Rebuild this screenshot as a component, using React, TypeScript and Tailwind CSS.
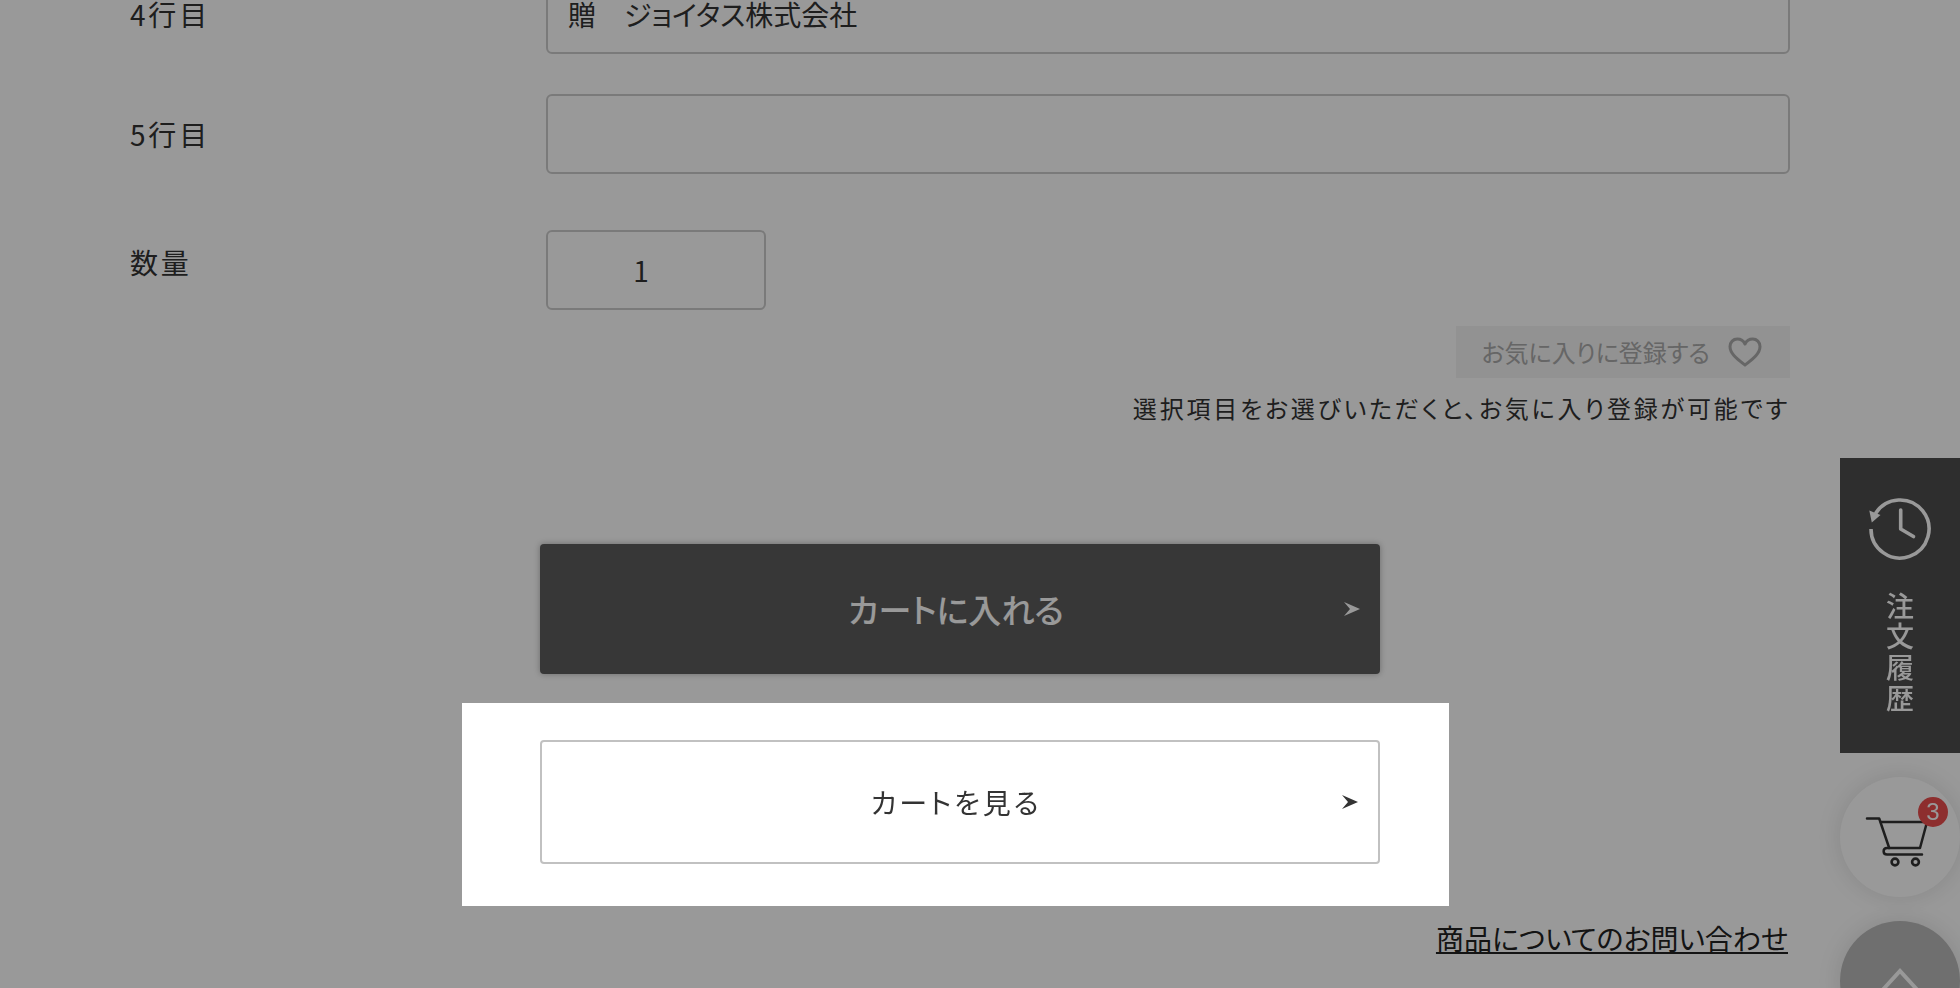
import type { ReactNode } from 'react';
import { useState } from 'react';

function ArrowHead() {
  return (
    <svg viewBox="0 0 16 14" className="absolute top-1/2 right-5 h-[14px] w-4 -translate-y-1/2" aria-hidden="true">
      <path d="M0 0 L16 7 L0 14 L6 7 Z" fill="currentColor" />
    </svg>
  );
}

function HistoryIcon() {
  return (
    <svg viewBox="0 0 64 64" className="h-16 w-16" fill="none" stroke="currentColor" strokeWidth="3.6" aria-hidden="true">
      <path d="M3 31 A29 29 0 1 0 7.5 15.5" />
      <path d="M1.3 12.5 L12.5 17 L3.8 24.5 Z" fill="currentColor" stroke="none" />
      <path d="M32.7 12 V31 L45.5 38.5" strokeLinecap="round" strokeLinejoin="round" />
    </svg>
  );
}

function CartIcon() {
  return (
    <svg viewBox="0 0 120 120" className="h-full w-full" fill="none" stroke="#333" strokeWidth="2.5" aria-hidden="true">
      <path d="M27 41.5 H39.2 L49.2 71" strokeLinecap="round" strokeLinejoin="round" />
      <path d="M41 45 H87 L80 71 H47 C42.5 71 42.5 77.5 47 77.5 H82" strokeLinecap="round" strokeLinejoin="round" />
      <circle cx="55" cy="85" r="3.4" strokeWidth="2.6" />
      <circle cx="75.5" cy="85" r="3.4" strokeWidth="2.6" />
    </svg>
  );
}

function Row({ id, label, children }: { id: string; label: string; children: ReactNode }) {
  return (
    <div className="flex items-center">
      <label htmlFor={id} className="w-[416px] shrink-0 leading-7 tracking-widest">
        {label}
      </label>
      {children}
    </div>
  );
}

const inputClass = 'h-20 rounded-md border-2 border-[#ccc] bg-white leading-10 outline-none';

export default function App() {
  const [line4, setLine4] = useState('贈　ジョイタス株式会社');
  const [line5, setLine5] = useState('');
  const [count, setCount] = useState('1');

  return (
    <div
      lang="ja"
      className="relative min-h-screen overflow-hidden bg-white font-['Noto_Sans_CJK_JP',sans-serif] text-[28px] leading-10 text-[#333] [font-feature-settings:'palt']"
    >
      <main className="-mt-[26px] pr-[170px] pl-[130px]">
        {/* noshi lines and quantity */}
        <div className="flex flex-col gap-10">
          <Row id="line4" label="4行目">
            <input
              id="line4"
              type="text"
              value={line4}
              onChange={(e) => setLine4(e.target.value)}
              className={`${inputClass} min-w-0 flex-1 px-5`}
            />
          </Row>
          <Row id="line5" label="5行目">
            <input
              id="line5"
              type="text"
              value={line5}
              onChange={(e) => setLine5(e.target.value)}
              className={`${inputClass} min-w-0 flex-1 px-5`}
            />
          </Row>
        </div>
        <div className="mt-14 flex items-start">
          <label htmlFor="count" className="w-[416px] shrink-0 pt-3 tracking-widest">
            数量
          </label>
          <input
            id="count"
            type="text"
            inputMode="numeric"
            value={count}
            onChange={(e) => setCount(e.target.value)}
            className={`${inputClass} w-[220px] pr-[30px] text-center`}
          />
        </div>

        {/* favourites */}
        <div className="mt-4 flex flex-col items-end tracking-widest">
          <button
            type="button"
            disabled
            className="flex h-[52px] items-center gap-[18px] bg-[#f3f3f3] pr-7 pl-[26px] text-2xl tracking-normal text-[#aaa]"
          >
            お気に入りに登録する
            <svg viewBox="0 0 34 30" className="h-[30px] w-[34px]" fill="none" stroke="currentColor" strokeWidth="3" aria-hidden="true">
              <path
                d="M17 28 C10 22.5 2 17 2 9.5 C2 5 5.3 2 9.3 2 C12.8 2 15.5 3.8 17 7 C18.5 3.8 21.2 2 24.7 2 C28.7 2 32 5 32 9.5 C32 17 24 22.5 17 28 Z"
                strokeLinejoin="round"
              />
            </svg>
          </button>
          <p className="mt-3 text-2xl leading-9">選択項目をお選びいただくと、お気に入り登録が可能です</p>
        </div>

        <div className="mx-auto mt-[118px] max-w-[840px]">
          <button
            type="button"
            className="relative block h-[130px] w-full rounded bg-[#5d5d5d] pr-2 text-[33px] font-medium text-white shadow-[0_0_6px_rgba(0,0,0,0.3)]"
          >
            カートに入れる
            <ArrowHead />
          </button>

          {/* spotlight: everything outside this box is dimmed */}
          <div className="relative z-20 mt-[29px] -mr-[69px] -ml-[78px] bg-white pt-[37px] pr-[69px] pb-[42px] pl-[78px] shadow-[0_0_0_2000px_rgba(0,0,0,0.4)]">
            <a
              href="#cart"
              className="relative flex h-[124px] items-center justify-center rounded border-2 border-[#c1c1c1] pr-2 tracking-widest"
            >
              カートを見る
              <ArrowHead />
            </a>
          </div>
        </div>

        <div className="mt-3 flex justify-end pr-0.5">
          <a href="#contact" className="text-[#222] underline decoration-2 underline-offset-2">
            商品についてのお問い合わせ
          </a>
        </div>
      </main>

      {/* floating shortcuts on the right edge */}
      <nav className="fixed top-[458px] right-0 z-10 flex w-[120px] flex-col gap-6">
        <a href="#history" className="flex h-[295px] flex-col items-center bg-[#4e4e4e] pt-10 text-white">
          <HistoryIcon />
          <span className="mt-[30px] font-medium tracking-widest [writing-mode:vertical-rl]">注文履歴</span>
        </a>
        <a href="#cart" aria-label="カート" className="relative h-[120px] rounded-full bg-white shadow-[0_0_24px_rgba(0,0,0,0.12)]">
          <CartIcon />
          <span className="absolute top-5 right-3 flex h-[30px] w-[30px] items-center justify-center rounded-full bg-[#eb4d4d] font-['Liberation_Sans',sans-serif] text-2xl text-white">
            3
          </span>
        </a>
        <a href="#top" aria-label="ページの先頭へ" className="h-[120px] rounded-full bg-[#b9b9b9] shadow-[0_0_24px_rgba(0,0,0,0.12)]">
          <svg viewBox="0 0 120 120" className="h-full w-full" fill="none" stroke="#fff" strokeWidth="4" aria-hidden="true">
            <path d="M38 74 L60 50 L82 74" />
          </svg>
        </a>
      </nav>
    </div>
  );
}
